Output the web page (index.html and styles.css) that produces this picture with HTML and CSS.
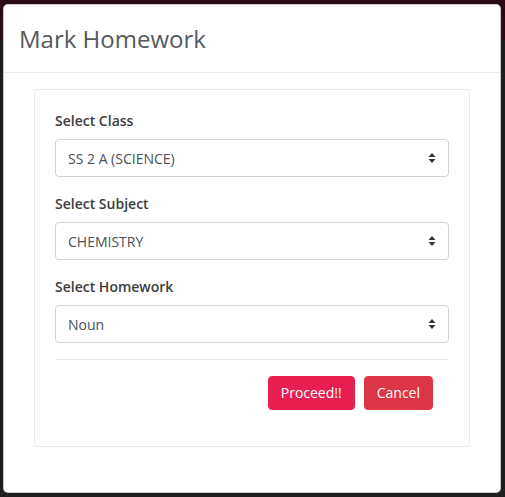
FILE: index.html
```html
<!DOCTYPE html>
<html>
<head>
<meta charset="utf-8">
<link rel="stylesheet" href="styles.css">
</head>
<body>
<div class="modal">
  <div class="modal-header">
    <h1 class="modal-title">Mark Homework</h1>
  </div>
  <div class="modal-body">
    <div class="card">
      <div class="form-group">
        <label class="label">Select Class</label>
        <div class="select"><span>SS 2 A (SCIENCE)</span><svg class="caret" width="8" height="12" viewBox="0 0 8 12"><path d="M4 1 L7.5 5 H0.5 Z M4 11 L7.5 7 H0.5 Z" fill="#333"/></svg></div>
      </div>
      <div class="form-group">
        <label class="label">Select Subject</label>
        <div class="select"><span>CHEMISTRY</span><svg class="caret" width="8" height="12" viewBox="0 0 8 12"><path d="M4 1 L7.5 5 H0.5 Z M4 11 L7.5 7 H0.5 Z" fill="#333"/></svg></div>
      </div>
      <div class="form-group">
        <label class="label">Select Homework</label>
        <div class="select"><span>Noun</span><svg class="caret" width="8" height="12" viewBox="0 0 8 12"><path d="M4 1 L7.5 5 H0.5 Z M4 11 L7.5 7 H0.5 Z" fill="#333"/></svg></div>
      </div>
      <hr class="divider">
      <div class="actions">
        <button class="btn btn-proceed">Proceed!!</button>
        <button class="btn btn-cancel">Cancel</button>
      </div>
    </div>
  </div>
</div>
</body>
</html>
```
FILE: styles.css
```css
html, body {
  margin: 0;
  padding: 0;
}
body {
  width: 505px;
  height: 497px;
  background: linear-gradient(to bottom, #2a0b15 0, #2a0b15 40px, #1e1e1e 40px, #1e1e1e 100%);
  font-family: "Open Sans", "Liberation Sans", sans-serif;
  padding: 4px 4px 4px 3px;
  box-sizing: border-box;
}
.modal {
  background: #fff;
  border-radius: 5px;
  height: 489px;
  box-sizing: border-box;
  border: 1px solid rgba(0,0,0,.2);
}
.modal-header {
  padding: 16px 16px 16px 15px;
  border-bottom: 1px solid #e9ecef;
}
.modal-title {
  margin: 0;
  font-size: 24px;
  font-weight: 400;
  line-height: 35px;
  color: #555a5e;
}
.modal-body {
  padding: 16px 30px 16px 30px;
}
.card {
  border: 1px solid #ececec;
  border-radius: 3px;
  padding: 20px 20px 20px 20px;
}
.form-group {
  margin-bottom: 16px;
}
.label {
  display: block;
  font-size: 14px;
  font-weight: 600;
  line-height: 21px;
  color: #3d3d3d;
  margin-bottom: 8px;
}
.select {
  height: 38px;
  box-sizing: border-box;
  border: 1px solid #ced4da;
  border-radius: 4px;
  padding: 0 12px 0 12px;
  display: flex;
  align-items: center;
  justify-content: space-between;
  font-size: 14px;
  color: #495057;
}
.divider {
  border: 0;
  border-top: 1px solid #e9e9e9;
  margin: 16px 0;
}
.actions {
  display: flex;
  justify-content: flex-end;
  gap: 9px;
  padding-right: 16px;
  margin-bottom: 16px;
}
.btn {
  font-family: "Open Sans", "Liberation Sans", sans-serif;
  font-size: 14px;
  line-height: 20px;
  padding: 6px 12px;
  border: 1px solid transparent;
  border-radius: 4px;
  color: #fff;
}
.btn-proceed {
  background: #e91e50;
  border-color: #e91e50;
}
.btn-cancel {
  background: #dc3545;
  border-color: #dc3545;
}
```
